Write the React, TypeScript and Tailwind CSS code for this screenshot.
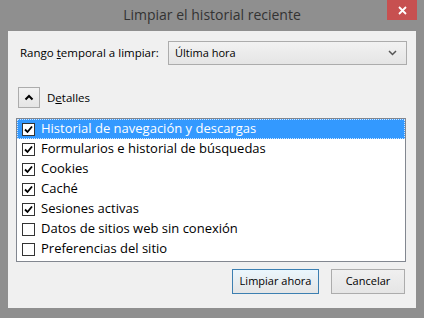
import { useState } from 'react';

const items = [
    { label: 'Historial de navegación y descargas', checked: true },
    { label: 'Formularios e historial de búsquedas', checked: true },
    { label: 'Cookies', checked: true },
    { label: 'Caché', checked: true },
    { label: 'Sesiones activas', checked: true },
    { label: 'Datos de sitios web sin conexión', checked: false },
    { label: 'Preferencias del sitio', checked: false },
];

function CheckBox({ checked }: { checked: boolean }) {
    return (
        <div className="w-[13px] h-[13px] border border-[#333] bg-white flex items-center justify-center shrink-0">
            {checked && (
                <svg width="9" height="9" viewBox="0 0 9 9">
                    <path d="M1 4.5 L3.5 7 L8 1.5" fill="none" stroke="#000" strokeWidth="1.8" />
                </svg>
            )}
        </div>
    );
}

export default function App() {
    const [rows, setRows] = useState(items);
    const [selected, setSelected] = useState(0);

    return (
        <div className="w-[424px] h-[318px] bg-[#8f8f8f] flex flex-col" style={{ fontFamily: '"Open Sans", "Noto Sans", sans-serif' }}>
            <div className="relative h-[31px] flex items-center justify-center">
                <span className="text-[14px] text-[#333] leading-none -mt-[2px]">Limpiar el historial reciente</span>
                <div className="absolute right-[7px] top-0 w-[30px] h-[20px] bg-[#c75050] flex items-center justify-center">
                    <svg width="9" height="9" viewBox="0 0 9 9">
                        <path d="M1 1 L8 8 M8 1 L1 8" stroke="#fff" strokeWidth="1.8" />
                    </svg>
                </div>
            </div>
            <div className="mx-[8px] h-[277px] bg-[#f0f0f0] flex flex-col text-[11.5px] text-black">
                <div className="flex items-center mt-[10px] pl-[12px]">
                    <span className="w-[148px]">
                        Rango <span className="underline">t</span>emporal a limpiar:
                    </span>
                    <div className="w-[239px] h-[24px] border border-[#acacac] bg-gradient-to-b from-[#f2f2f2] to-[#e5e5e5] flex items-center justify-between pl-[6px] pr-[9px] text-[11px]">
                        <span>Última hora</span>
                        <svg width="9" height="6" viewBox="0 0 9 6">
                            <path d="M1 1 L4.5 4.5 L8 1" fill="none" stroke="#555" strokeWidth="1.5" />
                        </svg>
                    </div>
                </div>
                <div className="flex items-center mt-[22px] pl-[10px]">
                    <div className="w-[22px] h-[21px] border border-[#acacac] bg-gradient-to-b from-[#f2f2f2] to-[#e5e5e5] flex items-center justify-center">
                        <svg width="10" height="7" viewBox="0 0 10 7">
                            <path d="M1.5 5.5 L5 2 L8.5 5.5" fill="none" stroke="#000" strokeWidth="2" />
                        </svg>
                    </div>
                    <span className="ml-[7px]">
                        D<span className="underline">e</span>talles
                    </span>
                </div>
                <div className="mt-[10px] ml-[8px] w-[390px] h-[144px] border border-[#828790] bg-white text-[13px]">
                    {rows.map((row, i) => (
                        <div
                            key={row.label}
                            onClick={() => {
                                setSelected(i);
                                setRows(rows.map((r, j) => (j === i ? { ...r, checked: !r.checked } : r)));
                            }}
                            className={`h-[20px] flex items-center pl-[5px] ${
                                i === selected ? 'bg-[#3399ff] text-white outline-1 outline-dotted outline-[#cfe6ff] -outline-offset-1' : ''
                            }`}
                        >
                            <CheckBox checked={row.checked} />
                            <span className="ml-[6px]">{row.label}</span>
                        </div>
                    ))}
                </div>
                <div className="flex justify-end gap-[12px] mt-[7px] pr-[11px] text-[11px]">
                    <button className="w-[87px] h-[25px] border border-[#3c7fb1] bg-gradient-to-b from-[#eaf6fd] to-[#e5e5e5]">
                        Limpiar ahora
                    </button>
                    <button className="w-[74px] h-[25px] border border-[#acacac] bg-gradient-to-b from-[#f0f0f0] to-[#e5e5e5]">
                        Cancelar
                    </button>
                </div>
            </div>
        </div>
    );
}
